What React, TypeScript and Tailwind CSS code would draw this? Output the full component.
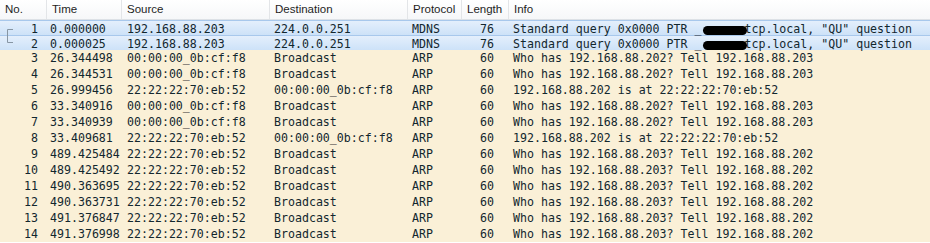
type Packet = {
  no: number;
  time: string;
  src: string;
  dst: string;
  proto: string;
  len: number;
  info: string;
};

const WHO_202 = 'Who has 192.168.88.202? Tell 192.168.88.203';
const WHO_203 = 'Who has 192.168.88.203? Tell 192.168.88.202';
const IS_AT = '192.168.88.202 is at 22:22:22:70:eb:52';
const A = '00:00:00_0b:cf:f8';
const B = '22:22:22:70:eb:52';

const packets: Packet[] = [
  { no: 1, time: '0.000000', src: '192.168.88.203', dst: '224.0.0.251', proto: 'MDNS', len: 76, info: '' },
  { no: 2, time: '0.000025', src: '192.168.88.203', dst: '224.0.0.251', proto: 'MDNS', len: 76, info: '' },
  { no: 3, time: '26.344498', src: A, dst: 'Broadcast', proto: 'ARP', len: 60, info: WHO_202 },
  { no: 4, time: '26.344531', src: A, dst: 'Broadcast', proto: 'ARP', len: 60, info: WHO_202 },
  { no: 5, time: '26.999456', src: B, dst: A, proto: 'ARP', len: 60, info: IS_AT },
  { no: 6, time: '33.340916', src: A, dst: 'Broadcast', proto: 'ARP', len: 60, info: WHO_202 },
  { no: 7, time: '33.340939', src: A, dst: 'Broadcast', proto: 'ARP', len: 60, info: WHO_202 },
  { no: 8, time: '33.409681', src: B, dst: A, proto: 'ARP', len: 60, info: IS_AT },
  { no: 9, time: '489.425484', src: B, dst: 'Broadcast', proto: 'ARP', len: 60, info: WHO_203 },
  { no: 10, time: '489.425492', src: B, dst: 'Broadcast', proto: 'ARP', len: 60, info: WHO_203 },
  { no: 11, time: '490.363695', src: B, dst: 'Broadcast', proto: 'ARP', len: 60, info: WHO_203 },
  { no: 12, time: '490.363731', src: B, dst: 'Broadcast', proto: 'ARP', len: 60, info: WHO_203 },
  { no: 13, time: '491.376847', src: B, dst: 'Broadcast', proto: 'ARP', len: 60, info: WHO_203 },
  { no: 14, time: '491.376998', src: B, dst: 'Broadcast', proto: 'ARP', len: 60, info: WHO_203 },
];

const cols = 'grid grid-cols-[47px_75px_148px_138px_54px_47px_1fr]';
const headers = ['No.', 'Time', 'Source', 'Destination', 'Protocol', 'Length', 'Info'];

function TreeMark({ first }: { first: boolean }) {
  // conversation bracket drawn left of the packet number
  return (
    <svg className="absolute left-0 top-0" width="16" height="16" viewBox="0 0 16 16">
      {first ? (
        <path d="M7.5 8.5 H13 M7.5 8.5 V16" stroke="#8796a4" strokeWidth="1" fill="none" />
      ) : (
        <path d="M7.5 0 V6.5 H13" stroke="#8796a4" strokeWidth="1" fill="none" />
      )}
    </svg>
  );
}

function MdnsInfo() {
  return (
    <span>
      Standard query 0x0000 PTR _
      <span className="inline-block h-[9px] w-[44px] ml-[2px] -mr-[3px] translate-y-[1px] rounded-[5px] bg-black align-middle" />
      tcp.local, "QU" question
    </span>
  );
}

export default function App() {
  return (
    <div className="w-[930px] h-[243px] overflow-hidden bg-white">
      {/* column header */}
      <div className={`${cols} h-[20px] bg-gradient-to-b from-white to-[#f6f7f9] border-b border-[#dde1e6] font-['Liberation_Sans',sans-serif] text-[11.5px] text-[#1e1e1e]`}>
        {headers.map((h, i) => (
          <div key={h} className={`flex items-center pl-[5px] ${i < headers.length - 1 ? 'border-r border-[#e3e5e8]' : ''}`}>
            {h}
          </div>
        ))}
      </div>

      {/* packet list */}
      <div className="font-['DejaVu_Sans_Mono',monospace] text-[11.6px] text-[#12272e]">
        {packets.map((p) => {
          const selected = p.proto === 'MDNS';
          return (
            <div
              key={p.no}
              className={`${cols} h-[16px] items-center whitespace-pre ${
                selected
                  ? 'bg-gradient-to-b from-[#e4effc] to-[#cde2f8] border-y border-[#a8c8ec] -mb-px'
                  : 'bg-[#faf0d7]'
              }`}
            >
              <div className="relative h-full flex items-center justify-end pr-[9px]">
                {selected && <TreeMark first={p.no === 1} />}
                {p.no}
              </div>
              <div className="pl-[3px]">{p.time}</div>
              <div className="pl-[5px]">{p.src}</div>
              <div className="pl-[4px]">{p.dst}</div>
              <div className="pl-[4px]">{p.proto}</div>
              <div className="text-right pr-[15px]">{p.len}</div>
              <div className="pl-[4px]">{selected ? <MdnsInfo /> : p.info}</div>
            </div>
          );
        })}
      </div>
    </div>
  );
}
